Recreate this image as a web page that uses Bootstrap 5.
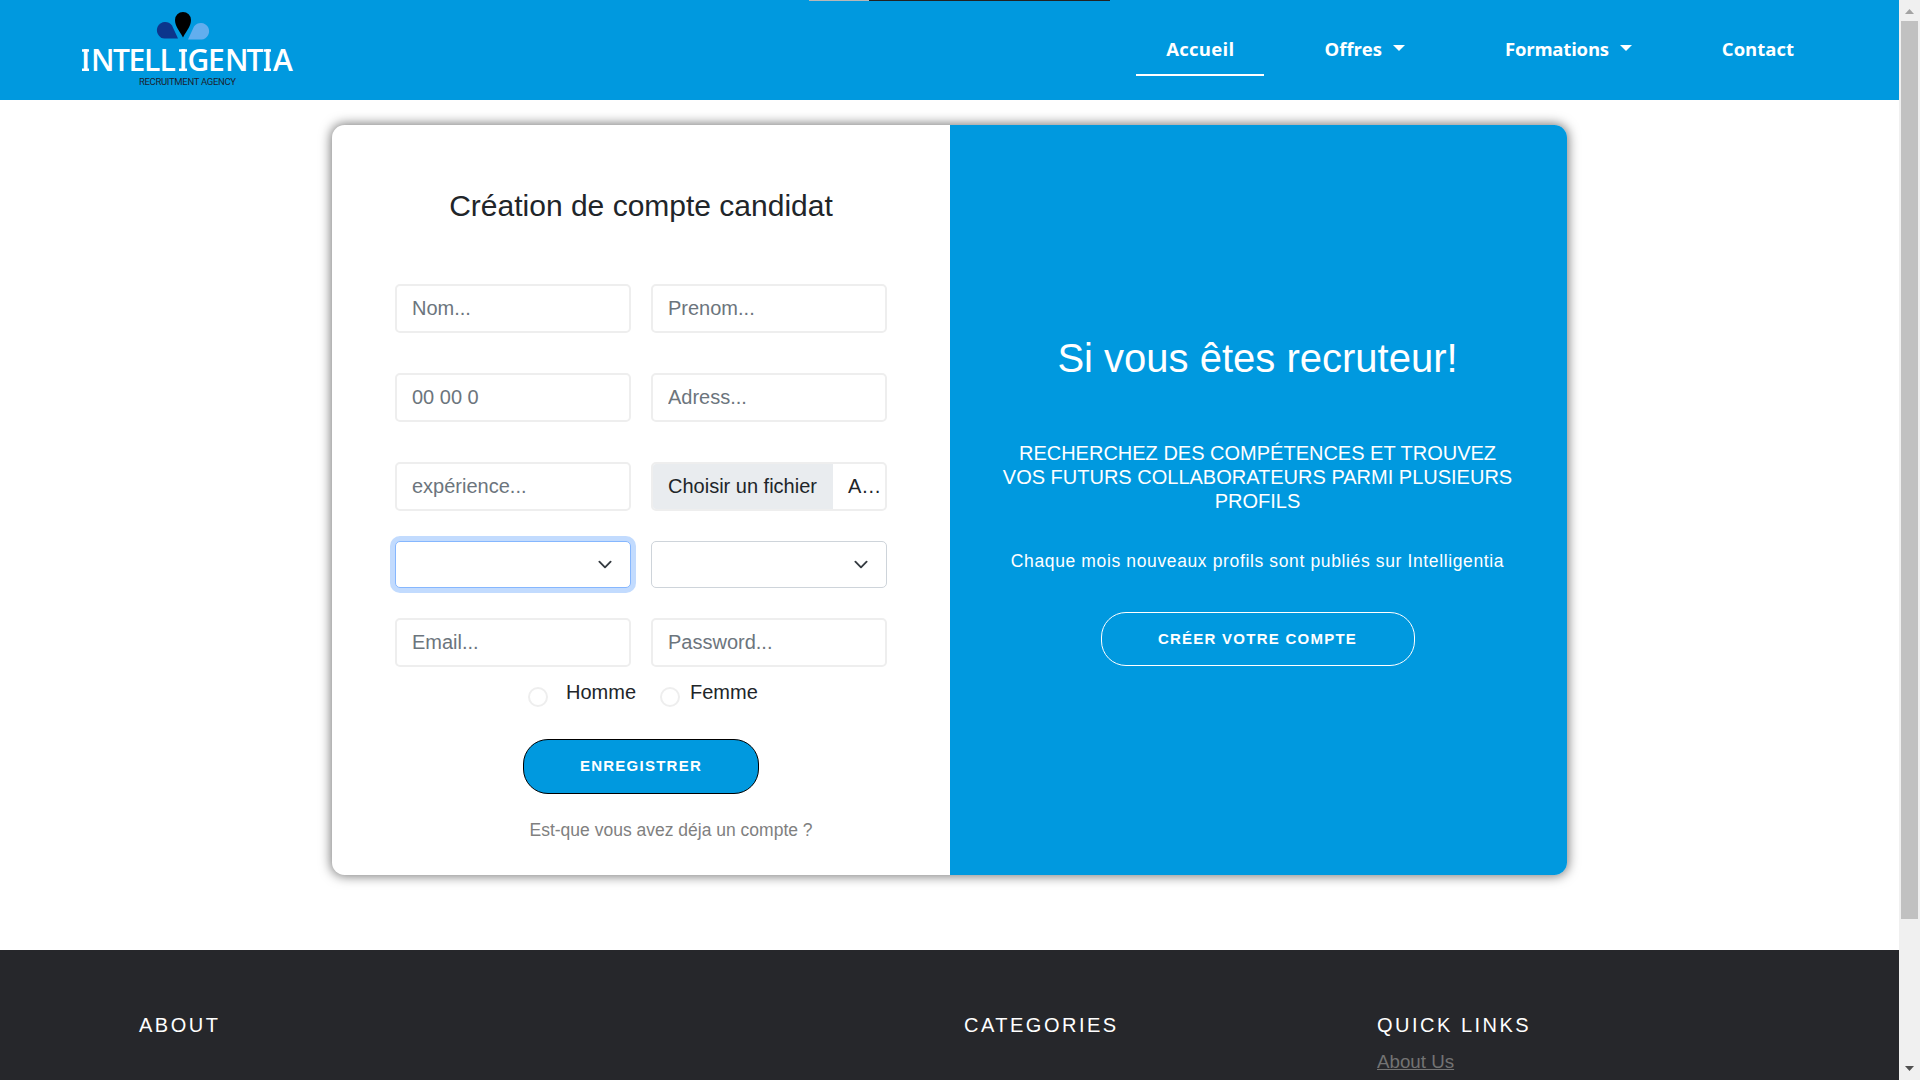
<!DOCTYPE html>
<html lang="fr">
<head>
<meta charset="utf-8">
<meta name="viewport" content="width=device-width, initial-scale=1">
<title>Intelligentia</title>
<link href="https://cdn.jsdelivr.net/npm/bootstrap@5.3.0/dist/css/bootstrap.min.css" rel="stylesheet">
<style>
html{font-size:20px}
body{font-family:"Liberation Sans",Arial,sans-serif;height:1080px;overflow:hidden;color:#212529;background:#fff}
.site{width:1899px;height:1080px;overflow:hidden}
.brand-bg{background:#0099df}
.topbar{height:100px;padding:0 75px 0 74px}
.topstrip{position:absolute;top:0;left:809px;width:301px;height:1px;background:linear-gradient(90deg,#b8b8b8 60px,#222 60px)}
.mainnav{gap:30px}
.mainnav .nav-link{font-family:"Open Sans",sans-serif;font-weight:700;font-size:18.5px;color:#fff;padding:0 30px;height:52px;line-height:50px;border-bottom:2px solid transparent;white-space:nowrap}
.mainnav .nav-link.active{border-color:#fff;letter-spacing:.3px}
.mainnav .offers{margin-right:10px}
.mainnav .trainings{letter-spacing:-.2px}
.mainnav .dropdown-toggle::after{margin-left:11px;border-top-width:6px;border-left-width:6px;border-right-width:6px;vertical-align:5px}
.signup{width:1235px;height:750px;margin:25px 0 75px 332px;border-radius:12.5px;overflow:hidden;box-shadow:0 0 12px 1px rgba(0,0,0,.55)}
.leftpane{width:618px;padding:63px 63px 0}
.signup h1{font-size:30px;line-height:36px;margin:0 0 60px;font-weight:400}
.fields{display:grid;grid-template-columns:236px 236px;column-gap:20px}
.fields .form-control{height:49px;border:2px solid #eee;border-radius:5px;padding:7px 15px;font-size:20px}
.fields .form-control::placeholder{color:#6c757d}
.fields .form-select{height:47px;border-radius:5px;margin:30px 0;border-color:#ced4da;background-size:20px 15px;background-position:right 15px center}
.fields .tall{margin-bottom:40px}
.fields .form-select.lit{border-color:#86b7fe;box-shadow:0 0 0 5px rgba(13,110,253,.25)}
.filebox span{padding:0 0 2px 15px}
.filebox .pick{background:#e9ecef;width:180px}
.gender{height:72px;margin-left:133px;padding-top:9px}
.gender label{padding-top:1px}
.gender .form-check-input{width:20px;height:20px;border:2px solid #eee;margin:11px 0 0}
.gender .man{margin:0 24px 0 18px}
.gender .woman{margin-left:10px}
.pill{height:55px;border-radius:25px;font-size:15px;font-weight:700;letter-spacing:1.25px;text-transform:uppercase;padding:0;color:#fff}
.save{width:236px;margin-left:128px;border:1px solid #000}
.create{width:314px;height:54px;border:1px solid #fff}
.have{font-size:17.5px;color:#808080;margin:23px 0 0 134.5px}
.rightpane{width:617px;color:#fff;padding:209px 44px 0 42px}
.rightpane h2{font-size:40px;line-height:48px;margin:0 0 59px}
.rightpane h3{font-size:20px;line-height:24px;margin:0 0 35px;padding:0 10px}
.rightpane p{font-size:17.5px;line-height:26px;letter-spacing:.63px;margin:0 0 38px}
.foot{background:#26272b;height:130px;padding:63px 0 0 139px;color:#fff}
.foot h6{font-size:20px;line-height:24px;letter-spacing:2.5px;margin:0 0 11px;font-weight:400}
.foot a{font-size:18.75px;line-height:28px;color:#737373}
.foot .wide{width:825px}
.foot .narrow{width:413px}
.sbar{width:21px;height:1080px;background:#f0f0f0;padding:9px 2px 9px}
.sbar svg{width:9px;height:5px}
.thumb{width:17px;height:898px;background:#c1c1c1;margin:7px 0 147px}
</style>
</head>
<body class="d-flex">
<div class="topstrip"></div>
<div class="site flex-shrink-0">
<header class="topbar brand-bg d-flex justify-content-between align-items-center">
<svg width="230" height="100" viewBox="74 0 230 100" role="img" aria-label="Intelligentia"><path d="M183 37.500C179 30 175 26 175 20a8 8 0 0 1 16 0c0 6-4 10-8 17.500z"/><path fill="#0c358c" d="M178 38.500H164.500a8.300 8.300 0 1 1 7.500-13z"/><path fill="#62aeee" d="M188 39.500h13.500a8.300 8.300 0 1 0-7.500-13z"/><text x="81 91 113 128.500 144 159.500 178.500 187.500 208 225 246.500 263 273" y="71" font-family="Open Sans" font-size="30" font-weight="600" fill="#fff">INTELLIGENTIA</text><path d="M82 50.500h7m-7 19.300h7M179 50.500h8m-8 19.300h8M264 50.500h7m-7 19.300h7" stroke="#fff" stroke-width="2.600"/><text x="139" y="85" font-family="Roboto" font-size="9.500" fill="#1b2330" textLength="97">RECRUITMENT AGENCY</text></svg>
<nav class="nav mainnav">
<a class="nav-link active" href="#">Accueil</a>
<a class="nav-link dropdown-toggle offers" href="#">Offres</a>
<a class="nav-link dropdown-toggle trainings" href="#">Formations</a>
<a class="nav-link" href="#">Contact</a>
</nav>
</header>
<main class="signup d-flex">
<section class="leftpane">
<h1 class="text-center">Création de compte candidat</h1>
<form>
<div class="fields">
<input class="form-control tall" placeholder="Nom...">
<input class="form-control tall" placeholder="Prenom...">
<input class="form-control tall" placeholder="00 00 0">
<input class="form-control tall" placeholder="Adress...">
<input class="form-control" placeholder="expérience...">
<div class="form-control filebox d-flex p-0 overflow-hidden"><span class="pick d-flex align-items-center flex-shrink-0">Choisir un fichier</span><span class="d-flex align-items-center">A…</span></div>
<select class="form-select lit"></select>
<select class="form-select"></select>
<input class="form-control" placeholder="Email...">
<input class="form-control" placeholder="Password...">
</div>
<div class="gender d-flex">
<input class="form-check-input" type="radio" name="sexe" id="h"><label class="man" for="h">Homme</label>
<input class="form-check-input" type="radio" name="sexe" id="f"><label class="woman" for="f">Femme</label>
</div>
<button type="button" class="btn pill save brand-bg d-block">Enregistrer</button>
<p class="have">Est-que vous avez déja un compte ?</p>
</form>
</section>
<section class="rightpane brand-bg text-center">
<h2>Si vous êtes recruteur!</h2>
<h3>RECHERCHEZ DES COMPÉTENCES ET TROUVEZ VOS FUTURS COLLABORATEURS PARMI PLUSIEURS PROFILS</h3>
<p>Chaque mois nouveaux profils sont publiés sur Intelligentia</p>
<button type="button" class="btn pill create">Créer votre compte</button>
</section>
</main>
<footer class="foot d-flex">
<div class="wide"><h6>ABOUT</h6></div>
<div class="narrow"><h6>CATEGORIES</h6></div>
<div><h6>QUICK LINKS</h6><a class="d-block" href="#">About Us</a></div>
</footer>
</div>
<div class="sbar d-flex flex-column align-items-center flex-shrink-0">
<svg class="flex-shrink-0" viewBox="0 0 9 5"><path d="M0 5 4.500 0 9 5z" fill="#a3a3a3"/></svg>
<div class="thumb flex-shrink-0"></div>
<svg class="flex-shrink-0" viewBox="0 0 9 5"><path d="M0 0h9L4.500 5z" fill="#505050"/></svg>
</div>
<script src="https://cdn.jsdelivr.net/npm/bootstrap@5.3.0/dist/js/bootstrap.bundle.min.js"></script>
</body>
</html>
